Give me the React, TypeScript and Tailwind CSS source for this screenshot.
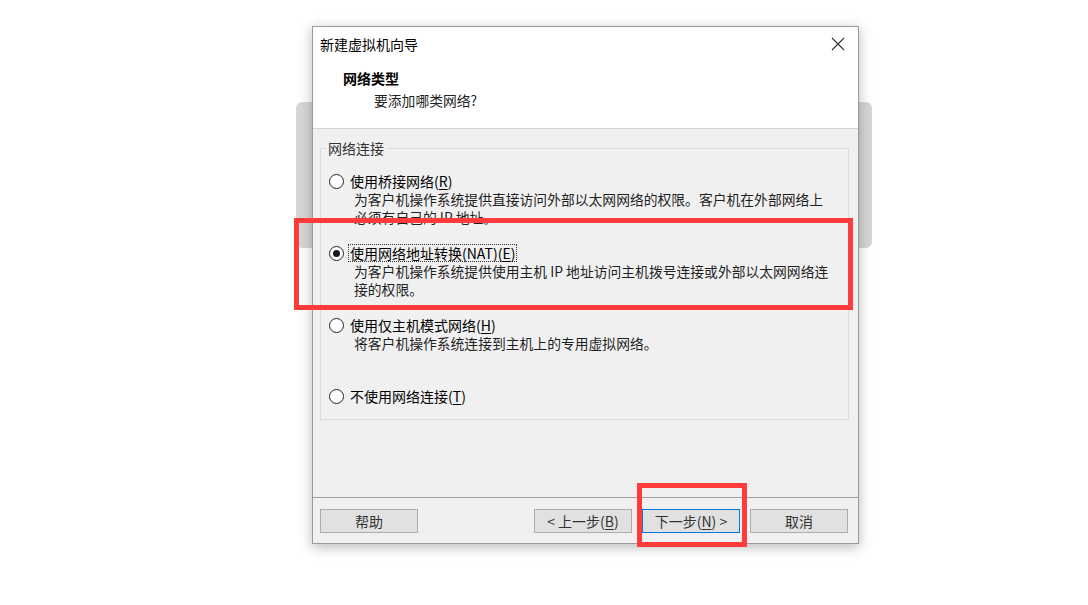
import React from 'react';

const Radio: React.FC<{ checked?: boolean }> = ({ checked }) => (
    <span className="w-[15px] h-[15px] rounded-full border-[1.5px] border-[#262626] bg-white flex items-center justify-center shrink-0">
        {checked && <span className="w-[7px] h-[7px] rounded-full bg-[#1a1a1a]"></span>}
    </span>
);

const Key: React.FC<{ k: string }> = ({ k }) => (
    <>
        (<u className="underline underline-offset-2">{k}</u>)
    </>
);

const Option: React.FC<{ label: React.ReactNode; lines: string[]; checked?: boolean; focused?: boolean; last?: boolean }> = ({
    label,
    lines,
    checked,
    focused,
    last,
}) => (
    <div className={last ? 'h-[18px]' : 'h-[72px]'}>
        <div className="flex items-center h-[18px] pl-[8px]">
            <Radio checked={checked} />
            <span
                className={`ml-[4px] leading-[16px] text-[14px] text-black ${focused ? 'border border-dotted border-[#333333] px-px' : 'border border-transparent px-px'}`}
            >
                {label}
            </span>
        </div>
        {lines.map((l) => (
            <div key={l} className="pl-[33px] h-[18px] leading-[18px] text-[13.8px] text-[#1f1f1f] whitespace-nowrap">
                {l}
            </div>
        ))}
    </div>
);

const Button: React.FC<{ children: React.ReactNode; primary?: boolean }> = ({ children, primary }) => (
    <button
        className={`w-[98px] h-[24px] flex items-center justify-center text-[14px] text-[#333333] bg-[#e1e1e1] border ${primary ? 'border-[#0078d7]' : 'border-[#adadad]'}`}
    >
        {children}
    </button>
);

export default function App() {
    return (
        <div className="relative w-[1088px] h-[605px] bg-white overflow-hidden font-['Noto_Sans_CJK_SC','Noto_Sans',sans-serif]">
            {/* window behind the dialog */}
            <div className="absolute left-[296px] top-[102px] w-[576px] h-[146px] rounded-[6px] bg-[#d6d6d6]"></div>

            {/* wizard dialog */}
            <div className="absolute left-[312px] top-[26px] w-[547px] h-[518px] flex flex-col bg-[#f0f0f0] border border-[#9a9a9a] shadow-[0_3px_12px_rgba(0,0,0,0.28)]">
                {/* title + header */}
                <div className="h-[102px] bg-white border-b border-[#d5d5d5] flex flex-col">
                    <div className="h-[34px] flex items-center justify-between pl-[7px] pr-[13px]">
                        <span className="text-[14px] text-black leading-[20px]">新建虚拟机向导</span>
                        <svg width="14" height="14" viewBox="0 0 14 14" className="shrink-0">
                            <path d="M1 1 L13 13 M13 1 L1 13" stroke="#333333" strokeWidth="1.1" fill="none" />
                        </svg>
                    </div>
                    <div className="mt-[7px] pl-[30px] h-[20px] leading-[20px] text-[14px] font-bold text-black">网络类型</div>
                    <div className="mt-[2px] pl-[61px] h-[20px] leading-[20px] text-[13.8px] text-[#222222]">要添加哪类网络?</div>
                </div>

                {/* body */}
                <div className="flex-1 pl-[7px] pr-[9px] pt-[9px]">
                    <fieldset className="border border-[#dcdcdc] pt-[14px] pb-[14px]">
                        <legend className="ml-[5px] px-[2px] h-[20px] leading-[20px] text-[14px] text-[#333333]">网络连接</legend>
                        <Option
                            label={
                                <>
                                    使用桥接网络<Key k="R" />
                                </>
                            }
                            lines={['为客户机操作系统提供直接访问外部以太网网络的权限。客户机在外部网络上', '必须有自己的 IP 地址。']}
                        />
                        <Option
                            checked
                            focused
                            label={
                                <>
                                    使用网络地址转换(NAT)<Key k="E" />
                                </>
                            }
                            lines={['为客户机操作系统提供使用主机 IP 地址访问主机拨号连接或外部以太网网络连', '接的权限。']}
                        />
                        <div className="h-[71px]">
                            <Option
                                last
                                label={
                                    <>
                                        使用仅主机模式网络<Key k="H" />
                                    </>
                                }
                                lines={[]}
                            />
                            <div className="pl-[33px] h-[18px] leading-[18px] text-[13.8px] text-[#1f1f1f] whitespace-nowrap">
                                将客户机操作系统连接到主机上的专用虚拟网络。
                            </div>
                        </div>
                        <Option
                            last
                            label={
                                <>
                                    不使用网络连接<Key k="T" />
                                </>
                            }
                            lines={[]}
                        />
                    </fieldset>
                </div>

                {/* footer */}
                <div className="h-[46px] border-t border-[#a0a0a0] flex items-start pt-[11px] pl-[7px] pr-[10px]">
                    <Button>帮助</Button>
                    <div className="ml-auto flex gap-[10px]">
                        <Button>
                            &lt; 上一步<Key k="B" />
                        </Button>
                        <Button primary>
                            下一步<Key k="N" /> &gt;
                        </Button>
                        <Button>取消</Button>
                    </div>
                </div>
            </div>

            {/* red highlight boxes */}
            <div className="absolute left-[294px] top-[218px] w-[559px] h-[92px] border-[5px] border-[#ff3b3b]"></div>
            <div className="absolute left-[637px] top-[483px] w-[110px] h-[64px] border-[5px] border-[#ff3b3b]"></div>
        </div>
    );
}
